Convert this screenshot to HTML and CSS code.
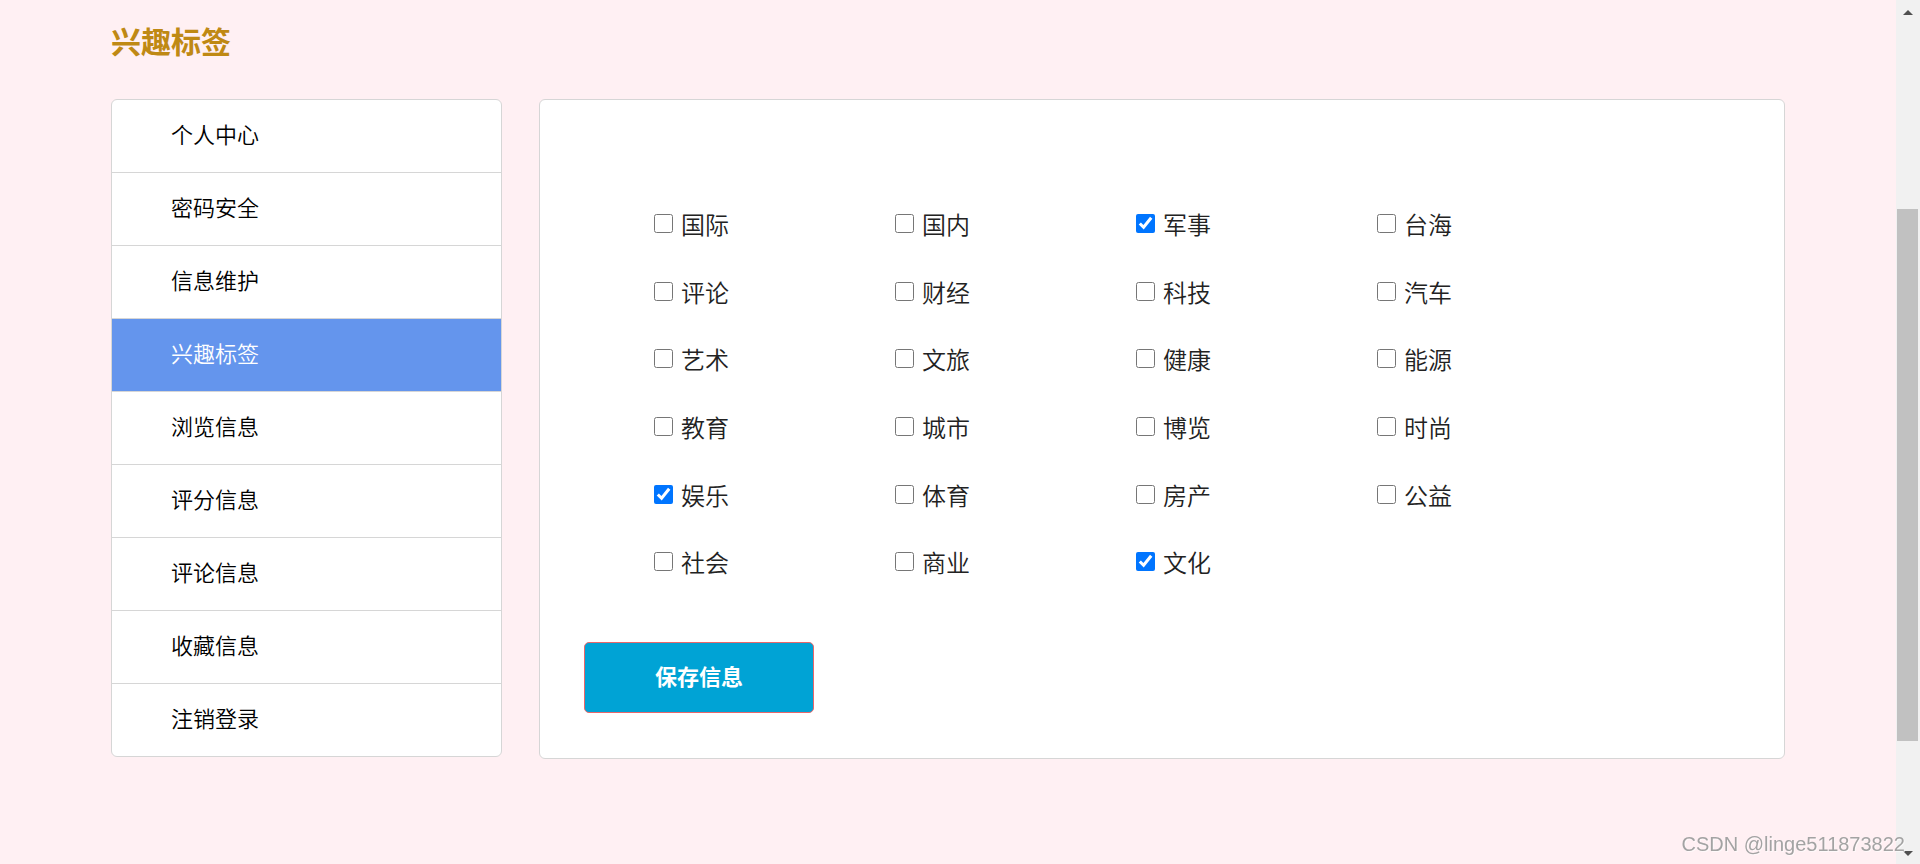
FILE: index.html
```html
<!DOCTYPE html>
<html lang="zh-CN">
<head>
<meta charset="utf-8">
<title>兴趣标签</title>
<link rel="stylesheet" href="styles.css">
</head>
<body>
<div class="page">
  <h1 class="title">兴趣标签</h1>
  <div class="layout">
    <ul class="menu">
      <li>个人中心</li>
      <li>密码安全</li>
      <li>信息维护</li>
      <li class="active">兴趣标签</li>
      <li>浏览信息</li>
      <li>评分信息</li>
      <li>评论信息</li>
      <li>收藏信息</li>
      <li>注销登录</li>
    </ul>
    <div class="panel">
      <div class="tags">
        <label class="tag"><input type="checkbox">国际</label>
        <label class="tag"><input type="checkbox">国内</label>
        <label class="tag"><input type="checkbox" checked>军事</label>
        <label class="tag"><input type="checkbox">台海</label>
        <label class="tag"><input type="checkbox">评论</label>
        <label class="tag"><input type="checkbox">财经</label>
        <label class="tag"><input type="checkbox">科技</label>
        <label class="tag"><input type="checkbox">汽车</label>
        <label class="tag"><input type="checkbox">艺术</label>
        <label class="tag"><input type="checkbox">文旅</label>
        <label class="tag"><input type="checkbox">健康</label>
        <label class="tag"><input type="checkbox">能源</label>
        <label class="tag"><input type="checkbox">教育</label>
        <label class="tag"><input type="checkbox">城市</label>
        <label class="tag"><input type="checkbox">博览</label>
        <label class="tag"><input type="checkbox">时尚</label>
        <label class="tag"><input type="checkbox" checked>娱乐</label>
        <label class="tag"><input type="checkbox">体育</label>
        <label class="tag"><input type="checkbox">房产</label>
        <label class="tag"><input type="checkbox">公益</label>
        <label class="tag"><input type="checkbox">社会</label>
        <label class="tag"><input type="checkbox">商业</label>
        <label class="tag"><input type="checkbox" checked>文化</label>
      </div>
      <button class="save" type="button">保存信息</button>
    </div>
  </div>
</div>
<div class="scrollbar">
  <span class="arrow up"></span>
  <span class="thumb"></span>
  <span class="arrow down"></span>
</div>
<div class="watermark">CSDN @linge511873822</div>
</body>
</html>
```
FILE: styles.css
```css
html, body {
  margin: 0;
  padding: 0;
}
body {
  background: #fff0f3;
  font-family: "Noto Sans CJK SC", "Noto Sans", sans-serif;
  height: 864px;
  overflow: hidden;
  padding-right: 24px;
  box-sizing: border-box;
}
.page {
  width: 1674px;
  margin: 0 auto;
}
.title {
  margin: 0 0 37px 0;
  padding-top: 20px;
  height: 42px;
  font-size: 30px;
  line-height: 40px;
  font-weight: bold;
  color: #bf8914;
}
.layout {
  display: flex;
  gap: 37px;
  align-items: flex-start;
}
.menu {
  list-style: none;
  margin: 0;
  padding: 0;
  width: 389px;
  background: #fff;
  border: 1px solid #d6d6d6;
  border-radius: 6px;
  overflow: hidden;
}
.menu li {
  height: 72px;
  line-height: 66px;
  padding-left: 59px;
  font-size: 22px;
  font-weight: 350;
  color: #000;
  border-top: 1px solid #d6d6d6;
}
.menu li:first-child {
  border-top: none;
}
.menu li.active {
  background: #6495ed;
  color: #fff;
}
.panel {
  flex: 1;
  height: 660px;
  box-sizing: border-box;
  background: #fff;
  border: 1px solid #d6d6d6;
  border-radius: 6px;
  padding-top: 90px;
}
.tags {
  display: grid;
  grid-template-columns: repeat(4, 241px);
  grid-auto-rows: 67.6px;
  padding-left: 114px;
}
.tag {
  display: flex;
  align-items: center;
  font-size: 24px;
  font-weight: 350;
  color: #222;
}
.tag input {
  width: 19px;
  height: 19px;
  margin: 0 8px 0 0;
}
.save {
  display: block;
  margin: 46px 0 0 44px;
  width: 230px;
  height: 71px;
  padding: 0 0 4px 0;
  background: #00a3d5;
  border: 1px solid #e8676b;
  border-radius: 5px;
  color: #fff;
  font-family: "Noto Sans CJK SC", sans-serif;
  font-size: 22px;
  font-weight: bold;
}
.scrollbar {
  position: fixed;
  top: 0;
  right: 0;
  width: 24px;
  height: 864px;
  background: #f1f1f1;
}
.thumb {
  position: absolute;
  left: 1px;
  top: 209px;
  width: 21px;
  height: 532px;
  background: #c1c1c1;
}
.arrow {
  position: absolute;
  left: 7px;
  width: 0;
  height: 0;
  border-left: 5px solid transparent;
  border-right: 5px solid transparent;
}
.arrow.up {
  top: 10px;
  border-bottom: 5px solid #505050;
}
.arrow.down {
  bottom: 8px;
  border-top: 5px solid #505050;
}
.watermark {
  position: fixed;
  right: 15px;
  bottom: 8px;
  font-family: "Liberation Sans", Arial, sans-serif;
  font-size: 20px;
  color: #a3a3a3;
  text-shadow: 1px 1px 0 rgba(255, 255, 255, 0.6);
  white-space: nowrap;
}
```
